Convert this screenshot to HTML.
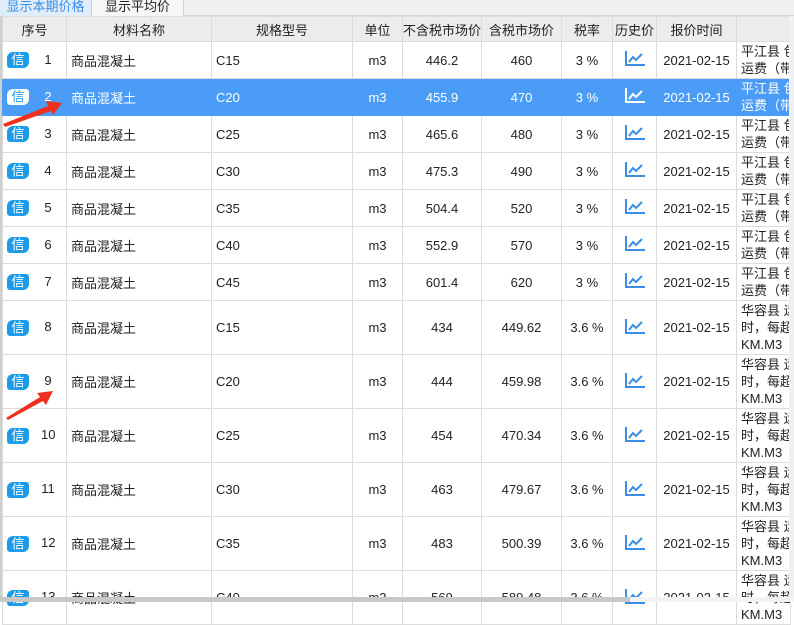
<!DOCTYPE html>
<html><head><meta charset="utf-8"><style>
*{margin:0;padding:0;box-sizing:border-box}
body{width:794px;height:602px;overflow:hidden;background:#fff;font-family:"Liberation Sans","Noto Sans CJK SC",sans-serif;font-size:13px;color:#222;position:relative}
.tabs{position:absolute;left:0;top:0;width:794px;height:16px;background:#f0f0f0;border-bottom:1px solid #d8d8d8}
.tab{position:absolute;top:0;height:16px;line-height:13px;font-size:13px;text-align:center;border-right:1px solid #d0d0d0;overflow:hidden}
table{position:absolute;left:2px;top:16px;border-collapse:collapse;table-layout:fixed;width:788px}
td,th{border:1px solid #dcdcdc;overflow:hidden;white-space:nowrap;text-align:center;font-weight:normal;padding:0}
th{background:#ececec;height:25px;font-size:13px}
td.l{text-align:left;padding-left:4px}
td.n{text-align:left;padding-left:4px;line-height:17px;white-space:nowrap;vertical-align:middle}
td.n div{height:17px;overflow:hidden;white-space:nowrap}
tr.s td{background:#4a9cf6;color:#fff;border-color:#4a9cf6}
.b{display:inline-block;width:22px;height:16px;background:#1c9ce8;color:#fff;border-radius:6px 3px 6px 3px;font-size:13px;line-height:16px;text-align:center;vertical-align:middle}
tr.s .b{background:#fff;color:#1c9ce8}
.sq{position:relative}
.num{position:absolute;left:38px;width:14px;text-align:center}
.vs{position:absolute;left:789px;top:16px;width:5px;height:586px;background:#f0f0f0}
.hs{position:absolute;left:0;top:597px;width:794px;height:5px;background:#f3f3f3}
.hs div{width:630px;height:5px;background:#c8c8c8}
</style></head><body>
<div class="tabs">
<div class="tab" style="left:0;width:92px;background:#e0eefc;color:#3a8ee6">显示本期价格</div>
<div class="tab" style="left:92px;width:92px;background:#f6f6f6">显示平均价</div>
</div>
<div style="position:absolute;left:0;top:16px;width:2px;height:586px;background:#cfcfcf"></div>
<table>
<colgroup><col style="width:64px"><col style="width:145px"><col style="width:141px"><col style="width:50px"><col style="width:79px"><col style="width:80px"><col style="width:51px"><col style="width:44px"><col style="width:80px"><col style="width:54px"></colgroup>
<tr><th>序号</th><th>材料名称</th><th>规格型号</th><th>单位</th><th>不含税市场价</th><th>含税市场价</th><th>税率</th><th>历史价</th><th>报价时间</th><th></th></tr>
<tbody id="tb"></tbody>
</table>
<div class="vs"></div>
<div class="hs"><div></div></div>
<svg style="position:absolute;left:0;top:0" width="794" height="602">
<polygon points="3,124 48,106 46,101 62,103 53,115 51,111 5,127" fill="#f0301e"/>
<polygon points="6,418 40,397 37,393 53,391 46,405 43,401 8,420" fill="#f0301e"/>
</svg>
<script>
var rows=[["1","C15","446.2","460","3 %",0],["2","C20","455.9","470","3 %",0],["3","C25","465.6","480","3 %",0],["4","C30","475.3","490","3 %",0],["5","C35","504.4","520","3 %",0],["6","C40","552.9","570","3 %",0],["7","C45","601.4","620","3 %",0],["8","C15","434","449.62","3.6 %",1],["9","C20","444","459.98","3.6 %",1],["10","C25","454","470.34","3.6 %",1],["11","C30","463","479.67","3.6 %",1],["12","C35","483","500.39","3.6 %",1],["13","C40","569","589.48","3.6 %",1]];
var h="";rows.forEach(function(r){var c=r[0]=="2"?' class="s"':'';var ht=r[5]?54:37;
var col=r[0]=="2"?"#fff":"#3a8ee6";
var icon='<svg width="20" height="15" viewBox="0 0 20 15"><path d="M1 0V14H20" fill="none" stroke="'+col+'" stroke-width="2"/><path d="M4 11L8 6L11 9L17 3" fill="none" stroke="'+col+'" stroke-width="2"/></svg>';
var note=r[5]?'<div>华容县 运</div><div>时，每超</div><div>KM.M3</div>':'<div>平江县 包</div><div>运费（带</div>';
h+='<tr'+c+' style="height:'+ht+'px"><td class="l sq"><span class="b">信</span><span class="num">'+r[0]+'</span></td><td class="l">商品混凝土</td><td class="l">'+r[1]+'</td><td>m3</td><td>'+r[2]+'</td><td>'+r[3]+'</td><td>'+r[4]+'</td><td>'+icon+'</td><td>2021-02-15</td><td class="n">'+note+'</td></tr>';});
document.getElementById("tb").innerHTML=h;
</script>
</body></html>
